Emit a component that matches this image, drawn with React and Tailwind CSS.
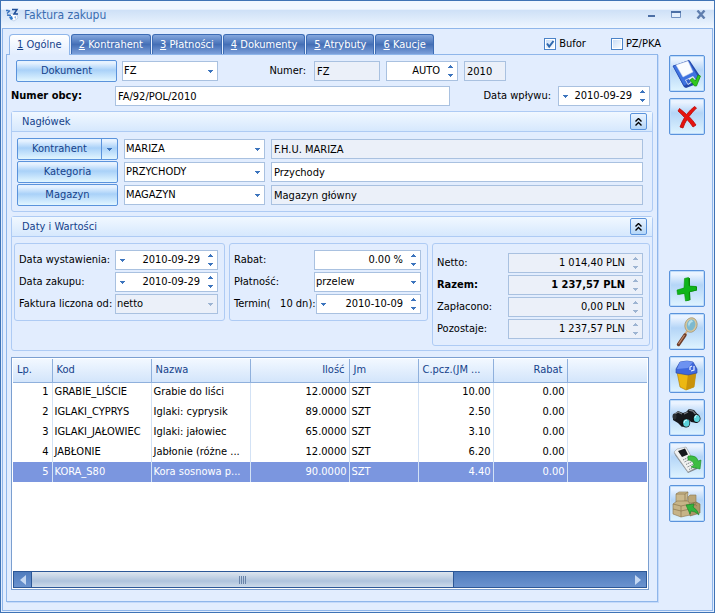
import { useState } from "react";

const TABS = ["Ogólne", "Kontrahent", "Płatności", "Dokumenty", "Atrybuty", "Kaucje"];

const ITEMS = [
  { lp: 1, code: "GRABIE_LIŚCIE", name: "Grabie do liści", qty: "12.0000", unit: "SZT", price: "10.00", discount: "0.00" },
  { lp: 2, code: "IGLAKI_CYPRYS", name: "Iglaki: cyprysik", qty: "89.0000", unit: "SZT", price: "2.50", discount: "0.00" },
  { lp: 3, code: "IGLAKI_JAŁOWIEC", name: "Iglaki: jałowiec", qty: "65.0000", unit: "SZT", price: "3.10", discount: "0.00" },
  { lp: 4, code: "JABŁONIE", name: "Jabłonie (różne ...", qty: "12.0000", unit: "SZT", price: "6.20", discount: "0.00" },
  { lp: 5, code: "KORA_S80", name: "Kora sosnowa p...", qty: "90.0000", unit: "SZT", price: "4.40", discount: "0.00" },
];

export default function App() {
  const [tab, setTab] = useState(0);
  const [selected, setSelected] = useState(5);

  return (
    <div className="flex min-h-screen flex-col border border-[#3f73b5] bg-[#e2edfe] font-['DejaVu_Sans_Condensed','DejaVu_Sans',sans-serif] text-[11px] leading-4 text-black">
      {/* Title bar */}
      <header className="flex h-[27px] items-center bg-linear-to-b from-[#f1f7ff] from-30% via-[#cfe1f7] via-35% to-[#eef6ff] pr-2 pl-[5px]">
        <LogoIcon />
        <h1 className="ml-1 flex-1 text-[12px] text-[#3a6cb0]">Faktura zakupu</h1>
        <WindowButtons />
      </header>

      <div className="mx-px mb-px flex flex-1 border border-[#8fb6ea]">
        <main className="flex min-w-0 flex-1 flex-col pt-[5px] pb-2 pl-[3px]">
          {/* Tabs */}
          <div className="flex h-5 items-stretch pl-[3px]">
            {TABS.map((name, i) => (
              <button
                key={name}
                type="button"
                onClick={() => setTab(i)}
                className={
                  tab === i
                    ? "relative -mb-px h-[21px] rounded-t-[4px] border border-b-0 border-[#8fb6ea] bg-linear-to-b from-white to-[#e2edfe] px-[7px] text-[#15428b]"
                    : "ml-px rounded-t-[3px] border border-b-0 border-[#3d6cb4] bg-linear-to-b from-[#86a8de] via-[#446fb6] via-50% to-[#7da0da] px-[7px] text-white"
                }
              >
                <span className="underline">{i + 1}</span> {name}
              </button>
            ))}
            <div className="flex flex-1 items-center justify-end gap-[25px] pr-2">
              <CheckBox label="Bufor" checked />
              <CheckBox label="PZ/PKA" />
            </div>
          </div>

          <div className="mr-[11px] flex flex-1 flex-col border border-[#8fb6ea] px-1 pt-[5px] pb-[11px] shadow-[1px_1px_0_#c5dafa]">
            {/* Document number */}
            <div className="flex items-center pr-1 pl-[5px]">
              <PushButton>Dokument</PushButton>
              <div className="ml-[5px] w-24">
                <Select id="doc" label="Dokument" value="FZ" />
              </div>
              <label htmlFor="series" className="ml-auto pr-2">
                Numer:
              </label>
              <div className="w-[66px]">
                <TextBox id="series" value="FZ" readOnly />
              </div>
              <div className="ml-1.5 w-[72px]">
                <Spin id="number" label="Numer dokumentu" value="AUTO" />
              </div>
              <div className="mr-[143px] ml-1.5 w-[42px]">
                <TextBox id="year" label="Rok" value="2010" readOnly />
              </div>
            </div>
            <div className="mt-1 flex items-center pr-[3px]">
              <label htmlFor="foreign" className="w-[104px] font-bold">
                Numer obcy:
              </label>
              <div className="flex-1">
                <TextBox id="foreign" value="FA/92/POL/2010" />
              </div>
              <label htmlFor="received" className="w-[108px] pr-[7px] text-right">
                Data wpływu:
              </label>
              <div className="w-[92px]">
                <Spin id="received" value="2010-09-29" drop />
              </div>
            </div>

            <Group title="Nagłówek" className="mt-[5px]">
              <div className="flex flex-col gap-px px-[5px] pt-1.5 pb-[5px]">
                <HeaderRow label="Kontrahent" code="MARIZA" name="F.H.U. MARIZA" split />
                <HeaderRow label="Kategoria" code="PRZYCHODY" name="Przychody" editable />
                <HeaderRow label="Magazyn" code="MAGAZYN" name="Magazyn główny" />
              </div>
            </Group>

            <Group title="Daty i Wartości" className="mt-1">
              <div className="flex items-start gap-1 px-0.5 pt-1.5 pb-1">
                <Box size="w-[211px]">
                  <Field id="issued" label="Data wystawienia:" width="w-[103px]">
                    <Spin id="issued" value="2010-09-29" drop />
                  </Field>
                  <Field id="bought" label="Data zakupu:" width="w-[103px]">
                    <Spin id="bought" value="2010-09-29" drop />
                  </Field>
                  <Field id="basis" label="Faktura liczona od:" width="w-[103px]">
                    <Select id="basis" value="netto" disabled />
                  </Field>
                </Box>
                <Box size="w-[199px]">
                  <Field id="rebate" label="Rabat:" width="w-[107px]">
                    <Spin id="rebate" value="0.00 %" />
                  </Field>
                  <Field id="payment" label="Płatność:" width="w-[107px]">
                    <Select id="payment" value="przelew" />
                  </Field>
                  <Field id="due" label={"Termin(\u00a0\u00a0 10 dn):"} width="w-[107px]">
                    <Spin id="due" value="2010-10-09" drop />
                  </Field>
                </Box>
                <Box size="flex-1" tall>
                  <Field id="net" label="Netto:" width="w-[135px]">
                    <Spin id="net" value="1 014,40 PLN" readOnly />
                  </Field>
                  <Field id="total" label="Razem:" width="w-[135px]" bold>
                    <Spin id="total" value="1 237,57 PLN" readOnly bold />
                  </Field>
                  <Field id="paid" label="Zapłacono:" width="w-[135px]">
                    <Spin id="paid" value="0,00 PLN" readOnly />
                  </Field>
                  <Field id="left" label="Pozostaje:" width="w-[135px]">
                    <Spin id="left" value="1 237,57 PLN" readOnly />
                  </Field>
                </Box>
              </div>
            </Group>

            <ItemsGrid selected={selected} onSelect={setSelected} />
          </div>
        </main>

        {/* Toolbar */}
        <aside className="mr-[7px] flex flex-col gap-1.5 pt-[26px]">
          <ToolButton label="Zapisz"><SaveIcon /></ToolButton>
          <ToolButton label="Anuluj"><CancelIcon /></ToolButton>
          <div className="h-[123px]" />
          <ToolButton label="Dodaj"><AddIcon /></ToolButton>
          <ToolButton label="Podgląd"><LensIcon /></ToolButton>
          <ToolButton label="Usuń"><BinIcon /></ToolButton>
          <ToolButton label="Szukaj"><BinocularsIcon /></ToolButton>
          <ToolButton label="Kolektor"><CollectorIcon /></ToolButton>
          <ToolButton label="Dostawy"><BoxesIcon /></ToolButton>
        </aside>
      </div>
    </div>
  );
}

function ItemsGrid({ selected, onSelect }) {
  return (
    <div className="mt-1.5 mr-1 flex flex-1 flex-col border border-[#7b9fd0] bg-white p-px">
      <table className="w-full table-fixed border-collapse">
        <thead>
          <tr className="h-[23px] bg-linear-to-b from-[#f2f8ff] to-[#d3e5fb] text-left text-[#15428b]">
            <th className="w-[39px] border-r border-b border-[#8fb0dc] px-1 font-normal">Lp.</th>
            <th className="w-[99px] border-r border-b border-[#8fb0dc] px-1 font-normal">Kod</th>
            <th className="w-[99px] border-r border-b border-[#8fb0dc] px-1 font-normal">Nazwa</th>
            <th className="w-[99px] border-r border-b border-[#8fb0dc] px-1 text-right font-normal">Ilość</th>
            <th className="w-[69px] border-r border-b border-[#8fb0dc] px-1 font-normal">Jm</th>
            <th className="w-[75px] border-r border-b border-[#8fb0dc] px-1 font-normal whitespace-nowrap">C.pcz.(JM ...</th>
            <th className="w-[74px] border-r border-b border-[#8fb0dc] px-1 text-right font-normal">Rabat</th>
            <th className="border-b border-[#8fb0dc]" />
          </tr>
        </thead>
        <tbody>
          {ITEMS.map((item) => (
            <tr
              key={item.lp}
              onClick={() => onSelect(item.lp)}
              className={item.lp === selected ? "h-5 bg-[#7b96df] whitespace-nowrap text-white" : "h-5 whitespace-nowrap"}
            >
              <td className="border-r border-[#d3e2f5] px-[3px] text-right">{item.lp}</td>
              <td className="border-r border-[#d3e2f5] px-0.5">{item.code}</td>
              <td className="border-r border-[#d3e2f5] px-0.5">{item.name}</td>
              <td className="border-r border-[#d3e2f5] px-0.5 text-right">{item.qty}</td>
              <td className="border-r border-[#d3e2f5] px-0.5">{item.unit}</td>
              <td className="border-r border-[#d3e2f5] px-0.5 text-right">{item.price}</td>
              <td className="border-r border-[#d3e2f5] px-0.5 text-right">{item.discount}</td>
              <td />
            </tr>
          ))}
        </tbody>
      </table>

      {/* Horizontal scrollbar */}
      <div className="mt-auto flex h-[17px] border border-[#2c5796] bg-linear-to-b from-[#4f7cbd] to-[#6b93cf]">
        <button type="button" aria-label="Przewiń w lewo" className="flex w-[17px] items-center justify-center">
          <svg width="6" height="10" viewBox="0 0 6 10"><path d="M6 0v10L0 5z" fill="#c5d8f2" /></svg>
        </button>
        <div className="flex w-[67%] items-center justify-center gap-px border-x border-[#2c5796] bg-linear-to-b from-[#dde5ee] via-[#aec3dd] via-60% to-[#cddbea]">
          <i className="h-2 w-px bg-[#6883a8]" />
          <i className="h-2 w-px bg-[#6883a8]" />
          <i className="h-2 w-px bg-[#6883a8]" />
          <i className="h-2 w-px bg-[#6883a8]" />
        </div>
        <button type="button" aria-label="Przewiń w prawo" className="ml-auto flex w-[17px] items-center justify-center">
          <svg width="6" height="10" viewBox="0 0 6 10"><path d="M0 0v10l6-5z" fill="#c5d8f2" /></svg>
        </button>
      </div>
    </div>
  );
}

function Group({ title, className, children }) {
  return (
    <section className={`rounded-[3px] border border-[#aecbf4] ${className}`}>
      <div className="flex h-5 items-center border-b border-[#aecbf4] bg-linear-to-b from-[#f1f8ff] to-[#d6e8fd] pr-[5px] pl-2.5">
        <h2 className="flex-1 text-[#15428b]">{title}</h2>
        <button
          type="button"
          aria-label={`Zwiń: ${title}`}
          className="flex size-[17px] items-center justify-center rounded-[2px] border border-[#5a93dc] bg-linear-to-b from-[#eaf4ff] to-[#b4d6f8]"
        >
          <svg width="7" height="8" viewBox="0 0 7 8" fill="none" stroke="#000" strokeWidth="1.4">
            <path d="M.5 3.5l3-3 3 3M.5 7.5l3-3 3 3" />
          </svg>
        </button>
      </div>
      {children}
    </section>
  );
}

function HeaderRow({ label, code, name, split, editable }) {
  return (
    <div className="flex items-center pr-1">
      <PushButton split={split}>{label}</PushButton>
      <div className="ml-1.5 w-[141px]">
        <Select id={`${label}-code`} label={label} value={code} />
      </div>
      <div className="ml-1.5 flex-1">
        <TextBox id={`${label}-name`} label={`${label} - nazwa`} value={name} readOnly={!editable} />
      </div>
    </div>
  );
}

function PushButton({ children, split }) {
  return (
    <div className="flex h-[22px] w-[101px] shrink-0 rounded-[2px] border border-[#5a93dc] bg-linear-to-b from-[#e6f2ff] from-10% via-[#a9d1f8] via-45% to-[#e2f6ff] text-[#15428b]">
      <button type="button" className="flex-1">{children}</button>
      {split && (
        <button
          type="button"
          aria-label={`${children} - menu`}
          className="flex w-4 items-center justify-center border-l border-[#5a93dc]"
        >
          <Arrow />
        </button>
      )}
    </div>
  );
}

function Box({ size, tall, children }) {
  return (
    <div
      className={`flex flex-col gap-0.5 rounded-[3px] border border-[#aecbf4] pr-1.5 pb-1.5 pl-1 ${size} ${tall ? "pt-[9px]" : "pt-1.5"}`}
    >
      {children}
    </div>
  );
}

function Field({ id, label, width, bold, children }) {
  return (
    <div className="flex items-center">
      <label htmlFor={id} className={bold ? "flex-1 font-bold" : "flex-1 whitespace-nowrap"}>
        {label}
      </label>
      <div className={width}>{children}</div>
    </div>
  );
}

function TextBox({ id, label, value, readOnly }) {
  return (
    <input
      id={id}
      aria-label={label}
      defaultValue={value}
      readOnly={readOnly}
      className={`block h-5 w-full border border-[#a9c1e0] px-0.5 outline-none ${readOnly ? "bg-[#ebf0f9]" : "bg-white"}`}
    />
  );
}

function Select({ id, label, value, disabled }) {
  return (
    <div className="relative">
      <select
        id={id}
        aria-label={label}
        disabled={disabled}
        className={`block h-5 w-full appearance-none border border-[#a9c1e0] pr-3 pl-px opacity-100 outline-none ${disabled ? "bg-[#ebf0f9]" : "bg-white"}`}
      >
        <option>{value}</option>
      </select>
      <span className="pointer-events-none absolute inset-y-0 right-[5px] flex items-center">
        <Arrow muted={disabled} />
      </span>
    </div>
  );
}

function Spin({ id, label, value, drop, readOnly, bold }) {
  return (
    <div className={`flex h-5 items-center border border-[#a9c1e0] px-1 ${readOnly ? "bg-[#ebf0f9]" : "bg-white"}`}>
      {drop && (
        <button type="button" aria-label="Kalendarz" className="shrink-0">
          <Arrow />
        </button>
      )}
      <input
        id={id}
        aria-label={label}
        defaultValue={value}
        readOnly={readOnly}
        className={`w-full min-w-0 flex-1 bg-transparent text-right outline-none ${bold ? "font-bold" : ""}`}
      />
      <span className="ml-2 flex shrink-0 flex-col gap-1.5">
        <button type="button" aria-label="Więcej" disabled={readOnly}>
          <Arrow up muted={readOnly} />
        </button>
        <button type="button" aria-label="Mniej" disabled={readOnly}>
          <Arrow muted={readOnly} />
        </button>
      </span>
    </div>
  );
}

function Arrow({ up, muted }) {
  return (
    <svg className="block" width="5" height="3" viewBox="0 0 5 3" shapeRendering="crispEdges" fill={muted ? "#9db4d2" : "#3c74bd"}>
      <path d={up ? "M2 0h1v1h1v1h1v1H0V2h1V1h1z" : "M0 0h5v1H4v1H3v1H2V2H1V1H0z"} />
    </svg>
  );
}

function CheckBox({ label, checked }) {
  return (
    <label className="flex items-center gap-[3px]">
      <span className="relative flex size-3">
        <input
          type="checkbox"
          defaultChecked={checked}
          className="peer size-3 appearance-none border border-[#4b83c8] bg-linear-to-br from-[#c3daf6] to-white shadow-[inset_0_0_0_1px_#fff]"
        />
        <svg className="pointer-events-none absolute inset-0 hidden peer-checked:block" width="12" height="12" viewBox="0 0 12 12">
          <path d="M3 5.5l2.2 3L9.5 3" fill="none" stroke="#2f68ad" strokeWidth="2" />
        </svg>
      </span>
      {label}
    </label>
  );
}

function WindowButtons() {
  return (
    <div className="flex items-center gap-[15px]">
      <button type="button" aria-label="Minimalizuj">
        <svg className="block" width="9" height="9" viewBox="0 0 9 9"><path d="M1 6h7" stroke="#4c6fa5" strokeWidth="2" /></svg>
      </button>
      <button type="button" aria-label="Maksymalizuj">
        <svg className="block" width="10" height="8" viewBox="0 0 10 8">
          <path d="M.5 .5h9v6h-9z" fill="#e4effc" stroke="#7191c0" />
          <path d="M0 1h10" stroke="#4c6fa5" strokeWidth="2" />
        </svg>
      </button>
      <button type="button" aria-label="Zamknij">
        <svg className="block" width="10" height="9" viewBox="0 0 10 9">
          <path d="M1.5 .5l7 8M8.5 .5l-7 8" stroke="#5f7eae" strokeWidth="2.4" />
        </svg>
      </button>
    </div>
  );
}

function ToolButton({ label, children }) {
  return (
    <button
      type="button"
      aria-label={label}
      className="h-[37px] w-9 rounded-[2px] border border-[#5a93dc] bg-linear-to-b from-[#eaf3ff] from-10% via-[#b4d5f7] via-40% to-[#dff4ff] shadow-[inset_0_0_0_1px_#bfdcfa]"
    >
      {children}
    </button>
  );
}

function Icon({ children }) {
  return (
    <svg className="block" width="34" height="35" viewBox="1 1 34 35">
      {children}
    </svg>
  );
}

function LogoIcon() {
  return (
    <svg width="14" height="14" viewBox="0 0 14 14">
      <path d="M3 6l7-1 2 5-4 3-4-2z" fill="#fff" stroke="#a8bfdf" strokeWidth=".6" />
      <path d="M0 2.5h2l1 2M1 5.5l3-3M1 7l4 .5" stroke="#3470bd" strokeWidth="1.3" fill="none" />
      <path d="M6 1.5h5L8 6h4" stroke="#1f4f99" strokeWidth="1.5" fill="none" />
      <path d="M3 9l2 3 2-1-1-3z" fill="#2d78c9" />
      <path d="M8 9l2-1v3z" fill="#8fb2df" />
    </svg>
  );
}

function SaveIcon() {
  return (
    <Icon>
      <path d="M4 11l11 21 2 1 8-3 5-5 1-4L21 6l-1-1z" fill="#2448a8" />
      <path d="M4 11L20 6l10 17-15 8z" fill="#3f73e0" stroke="#2850b8" strokeWidth=".8" />
      <path d="M7 10l12-4 5 11-10 5z" fill="#fafcff" stroke="#c9d4ea" strokeWidth=".5" />
      <path d="M16 25l8-4 3 4-8 5z" fill="#e4eaf4" />
      <path d="M17 25l3-1 2 3-3 2z" fill="#3560ca" />
      <path d="M21 25l2.500-2 3 3 2.500-6 2.500 1-4 10h-2z" fill="#31c81d" stroke="#148c0a" strokeWidth=".7" />
    </Icon>
  );
}

function CancelIcon() {
  return (
    <Icon>
      <path d="M10.500 10.500q4 3 7 6 4-5 8-8l2 1.500q-4 4-7.500 8.500 4 4 7 8.500l-3 2q-3-4.500-6-7.500-2.500 4-4 8.500l-3-1q2-5.500 4.500-9.500-3-3.500-6.500-6.500z" fill="#e6140f" stroke="#b90804" strokeWidth=".8" />
    </Icon>
  );
}

function AddIcon() {
  return (
    <Icon>
      <path d="M17 8.500l4-.5v8l7 .5v4L21 22l.500 8-4 1-1-7.500-7 1-1-4 7-2.500z" fill="#087d08" />
      <path d="M15.500 8.500l4-1 .5 8.500 7 .5.500 3.500-7.500 2 .5 8-4 1-1-7.500-7 1-.5-4.500 7-2z" fill="#0fb51a" stroke="#0b960b" strokeWidth=".6" />
    </Icon>
  );
}

function LensIcon() {
  return (
    <Icon>
      <path d="M18 18l-3 5" stroke="#d8b48a" strokeWidth="2" />
      <path d="M16 22L9.500 31.500" stroke="#6e3d28" strokeWidth="3.400" strokeLinecap="round" />
      <path d="M15.500 22L9.500 31" stroke="#c58d70" strokeWidth="1.200" />
      <ellipse cx="22" cy="12" rx="5.200" ry="6.500" transform="rotate(15 22 12)" fill="#7db9cf" stroke="#d8c79c" strokeWidth="1.800" />
      <ellipse cx="22" cy="12" rx="6.100" ry="7.400" transform="rotate(15 22 12)" fill="none" stroke="#8c7b55" strokeWidth=".5" />
      <path d="M19 11q1-4 4-4l1 2q-3 0-4 5z" fill="#b8dfe9" />
    </Icon>
  );
}

function BinIcon() {
  return (
    <Icon>
      <path d="M8 16l11 2 8-2-2 15-8 3-6-3z" fill="#edb812" stroke="#a97807" strokeWidth=".6" />
      <path d="M19 18l8-2-2 15-8 3z" fill="#c9930b" />
      <path d="M7 13l4-7 7-1 6 1 4 7v4l-9 2-12-2z" fill="#3f68dc" stroke="#2442a2" strokeWidth=".6" />
      <path d="M11 6l7-1 6 1-5 6-11 1z" fill="#6d92f1" />
      <path d="M21 14v-3l2-1M25 10v4l-3 1" stroke="#eaf1ff" strokeWidth="1.200" fill="none" />
    </Icon>
  );
}

function BinocularsIcon() {
  return (
    <Icon>
      <path d="M4 16l5-4 5 2 3-1 3-3 5 1 6 7-3 6-6-1-3-3-1 5-5 3-4-4-5-3z" fill="#15181c" />
      <path d="M6 15l3-2 4 2M20 11l4 1 4 5M15 15l4-2" stroke="#777d84" strokeWidth="1.300" fill="none" />
      <ellipse cx="5.500" cy="17.500" rx="2" ry="3" fill="#2c3034" />
      <ellipse cx="17" cy="24" rx="4.200" ry="4.600" fill="#111" />
      <ellipse cx="17.300" cy="24" rx="3.200" ry="3.700" fill="#5bd3dc" />
      <ellipse cx="27.500" cy="19.500" rx="4" ry="4.400" fill="#111" />
      <ellipse cx="27.800" cy="19.500" rx="3" ry="3.500" fill="#5bd3dc" />
      <path d="M15 24q0-3 3-3M26 19q0-3 2-3" stroke="#d6fbff" strokeWidth="1" fill="none" />
    </Icon>
  );
}

function CollectorIcon() {
  return (
    <Icon>
      <path d="M5 10l1 3 13 18 9-4v-2L17 5z" fill="#7f8589" />
      <path d="M5 10l3-3 9-2 11 20-9 5z" fill="#f0f1f0" stroke="#9da3a6" strokeWidth=".6" />
      <path d="M9 9l7-2.500 3 6-6 2.500z" fill="#15191c" />
      <path d="M14 18l6-3M15.500 20l6-3M17 22.500l6-3M18.500 25l6-3M20 27.500l6-3" stroke="#7f878c" strokeWidth="1" strokeDasharray="1.500 .7" />
      <path d="M19 14q9-1 10 5l3-1-1 9-9-2 3-2q-1-5-6-5z" fill="#3ebd43" stroke="#178c25" strokeWidth=".6" />
    </Icon>
  );
}

function BoxesIcon() {
  return (
    <Icon>
      <path d="M7 9l3-2h9l-1 9-11 1z" fill="#cbb98e" stroke="#89764d" strokeWidth=".6" />
      <path d="M7 9h9l3-2M16 9v8" stroke="#89764d" strokeWidth=".7" fill="none" />
      <path d="M19 12l2-2h6v8h-8z" fill="#baa678" stroke="#89764d" strokeWidth=".6" />
      <path d="M4 19l4-3h11l2 3v11l-9 2-8-3z" fill="#c6b487" stroke="#89764d" strokeWidth=".6" />
      <path d="M4 19l8 2 9-2M12 21v11M4 24l8 2 9-2" stroke="#89764d" strokeWidth=".7" fill="none" />
      <path d="M21 19l6-2 4 2v9l-10 3z" fill="#ad9868" stroke="#7b683f" strokeWidth=".6" />
      <path d="M24 18l4 3M28 17l-4 5" stroke="#87734a" strokeWidth=".7" />
      <path d="M17 20l8-1-1 3q5 3 6 8-4-4-8-4l-1 3z" fill="#32b43c" stroke="#138523" strokeWidth=".6" />
    </Icon>
  );
}
